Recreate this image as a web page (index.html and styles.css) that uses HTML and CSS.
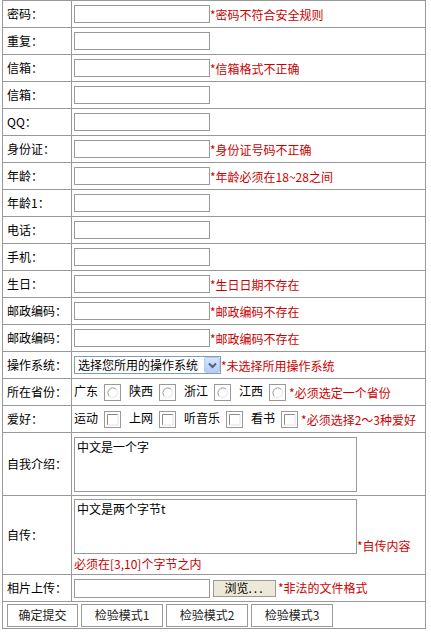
FILE: index.html
```html
<!DOCTYPE html>
<html lang="zh-CN">
<head>
<meta charset="utf-8">
<title>表单验证</title>
<link rel="stylesheet" href="styles.css">
</head>
<body>
<form class="form">
<table class="form-table">
  <colgroup><col class="col-label"><col class="col-field"></colgroup>
  <tr class="first"><td class="label">密码：</td><td class="field"><input class="text" type="text"><span class="err">*密码不符合安全规则</span></td></tr>
  <tr><td class="label">重复：</td><td class="field"><input class="text" type="text"></td></tr>
  <tr><td class="label">信箱：</td><td class="field"><input class="text" type="text"><span class="err">*信箱格式不正确</span></td></tr>
  <tr><td class="label">信箱：</td><td class="field"><input class="text" type="text"></td></tr>
  <tr><td class="label">QQ：</td><td class="field"><input class="text" type="text"></td></tr>
  <tr><td class="label">身份证：</td><td class="field"><input class="text" type="text"><span class="err">*身份证号码不正确</span></td></tr>
  <tr><td class="label">年龄：</td><td class="field"><input class="text" type="text"><span class="err">*年龄必须在18~28之间</span></td></tr>
  <tr><td class="label">年龄1：</td><td class="field"><input class="text" type="text"></td></tr>
  <tr><td class="label">电话：</td><td class="field"><input class="text" type="text"></td></tr>
  <tr><td class="label">手机：</td><td class="field"><input class="text" type="text"></td></tr>
  <tr><td class="label">生日：</td><td class="field"><input class="text" type="text"><span class="err">*生日日期不存在</span></td></tr>
  <tr><td class="label">邮政编码：</td><td class="field"><input class="text" type="text"><span class="err">*邮政编码不存在</span></td></tr>
  <tr><td class="label">邮政编码：</td><td class="field"><input class="text" type="text"><span class="err">*邮政编码不存在</span></td></tr>
  <tr><td class="label">操作系统：</td><td class="field"><span class="select"><select class="select-box"><option>选择您所用的操作系统</option><option>Windows</option><option>Linux</option></select><span class="select-btn"><svg width="9" height="7" viewBox="0 0 9 7"><path d="M1 1.5 L4.5 5 L8 1.5" fill="none" stroke="#4d6185" stroke-width="2"/></svg></span></span><span class="err">*未选择所用操作系统</span></td></tr>
  <tr><td class="label">所在省份：</td><td class="field">广东<span class="box"><svg width="15" height="15" viewBox="0 0 15 15"><circle cx="7.5" cy="7.5" r="5" fill="#fff" stroke="#e4e4e4"/><path d="M4 11 A5 5 0 0 1 11 4" fill="none" stroke="#a8a8a8"/></svg></span>陕西<span class="box"><svg width="15" height="15" viewBox="0 0 15 15"><circle cx="7.5" cy="7.5" r="5" fill="#fff" stroke="#e4e4e4"/><path d="M4 11 A5 5 0 0 1 11 4" fill="none" stroke="#a8a8a8"/></svg></span>浙江<span class="box"><svg width="15" height="15" viewBox="0 0 15 15"><circle cx="7.5" cy="7.5" r="5" fill="#fff" stroke="#e4e4e4"/><path d="M4 11 A5 5 0 0 1 11 4" fill="none" stroke="#a8a8a8"/></svg></span>江西<span class="box last"><svg width="15" height="15" viewBox="0 0 15 15"><circle cx="7.5" cy="7.5" r="5" fill="#fff" stroke="#e4e4e4"/><path d="M4 11 A5 5 0 0 1 11 4" fill="none" stroke="#a8a8a8"/></svg></span><span class="err">*必须选定一个省份</span></td></tr>
  <tr><td class="label">爱好：</td><td class="field">运动<span class="box"><svg width="15" height="15" viewBox="0 0 15 15"><path d="M2.5 13 V2.5 H13" fill="none" stroke="#8a8a8a"/><path d="M13 2.5 V13 H2.5" fill="none" stroke="#e2e2e2"/></svg></span>上网<span class="box"><svg width="15" height="15" viewBox="0 0 15 15"><path d="M2.5 13 V2.5 H13" fill="none" stroke="#8a8a8a"/><path d="M13 2.5 V13 H2.5" fill="none" stroke="#e2e2e2"/></svg></span>听音乐<span class="box"><svg width="15" height="15" viewBox="0 0 15 15"><path d="M2.5 13 V2.5 H13" fill="none" stroke="#8a8a8a"/><path d="M13 2.5 V13 H2.5" fill="none" stroke="#e2e2e2"/></svg></span>看书<span class="box last"><svg width="15" height="15" viewBox="0 0 15 15"><path d="M2.5 13 V2.5 H13" fill="none" stroke="#8a8a8a"/><path d="M13 2.5 V13 H2.5" fill="none" stroke="#e2e2e2"/></svg></span><span class="err">*必须选择2～3种爱好</span></td></tr>
  <tr class="intro"><td class="label">自我介绍：</td><td class="field"><textarea class="area">中文是一个字</textarea></td></tr>
  <tr class="bio"><td class="label">自传：</td><td class="field"><textarea class="area">中文是两个字节t</textarea><span class="err">*自传内容</span><br><span class="err">必须在[3,10]个字节之内</span></td></tr>
  <tr><td class="label">相片上传：</td><td class="field"><input class="text file-path" type="text"><button class="browse" type="button">浏览<span class="dots">...</span></button><span class="err">*非法的文件格式</span></td></tr>
  <tr><td class="actions" colspan="2"><div class="btn-group"><button class="btn btn-submit" type="button">确定提交</button><button class="btn btn-mode" type="button">检验模式1</button><button class="btn btn-mode" type="button">检验模式2</button><button class="btn btn-mode" type="button">检验模式3</button></div></td></tr>
</table>
</form>
</body>
</html>
```

FILE: styles.css
```css
html, body {
  margin: 0;
  padding: 0;
  background: #fff;
}
body {
  font-family: "Noto Sans CJK SC", "Liberation Sans", sans-serif;
  font-size: 12px;
  color: #000;
}
.form {
  margin: 0;
}
.form-table {
  border-collapse: collapse;
  table-layout: fixed;
  width: 424px;
  margin: -1px 0 0 2px;
}
.col-label {
  width: 69px;
}
.form-table td {
  border: 1px solid #999;
  height: 26px;
  padding: 0 0 0 2px;
  vertical-align: middle;
  white-space: nowrap;
  line-height: 16px;
}
.form-table td.label {
  padding-left: 4px;
}
.form-table tr.first td {
  border-top: 2px solid #999;
}
.form-table tr.intro td {
  height: 62px;
}
.form-table tr.bio td {
  height: 78px;
}
.text {
  box-sizing: border-box;
  width: 136px;
  height: 18px;
  margin: 0;
  padding: 0 2px;
  border: 1px solid #999;
  background: #fff;
  font: inherit;
  vertical-align: middle;
}
.file-path {
  height: 19px;
}
.err {
  color: #cc0000;
  vertical-align: middle;
}
.select {
  position: relative;
  display: inline-block;
  width: 147px;
  height: 18px;
  vertical-align: middle;
}
.select-box {
  appearance: none;
  -webkit-appearance: none;
  box-sizing: border-box;
  width: 147px;
  height: 18px;
  margin: 0;
  padding: 0 0 0 3px;
  border: 1px solid #7f9db9;
  border-radius: 0;
  background: #fff;
  font: inherit;
  color: #000;
  display: block;
}
.select-btn {
  position: absolute;
  top: 1px;
  right: 1px;
  width: 16px;
  height: 16px;
  box-sizing: border-box;
  border: 1px solid #b9cbf3;
  border-radius: 2px;
  background: linear-gradient(#d6e2fd, #b7cbf7);
  display: flex;
  align-items: center;
  justify-content: center;
  pointer-events: none;
}
.box {
  display: inline-block;
  box-sizing: border-box;
  width: 17px;
  height: 17px;
  border: 1px solid #999;
  background: #fff;
  margin: 0 8px 0 6px;
  vertical-align: middle;
}
.box svg {
  display: block;
}
.box.last {
  margin-right: 3px;
}
.area {
  box-sizing: border-box;
  width: 283px;
  height: 55px;
  margin: 0;
  padding: 1px 2px;
  border: 1px solid #999;
  font: inherit;
  line-height: 16px;
  resize: none;
  vertical-align: bottom;
  overflow: hidden;
}
.browse {
  box-sizing: border-box;
  width: 63px;
  height: 17px;
  margin: 0 2px 0 3px;
  padding: 0;
  border: 1px solid #999;
  background: #ece9d8;
  font: inherit;
  line-height: 14px;
  color: #000;
  vertical-align: middle;
}
.dots {
  letter-spacing: 2px;
}
.form-table td.actions {
  padding-left: 4px;
}
.btn-group {
  display: flex;
  gap: 3px;
}
.btn {
  box-sizing: border-box;
  height: 23px;
  margin: 0;
  padding: 0;
  border: 1px solid #999;
  background: #fff;
  font: inherit;
  color: #222;
}
.btn-submit {
  width: 71px;
}
.btn-mode {
  width: 82px;
}
.btn-mode:first-of-type {
  width: 83px;
}
```
